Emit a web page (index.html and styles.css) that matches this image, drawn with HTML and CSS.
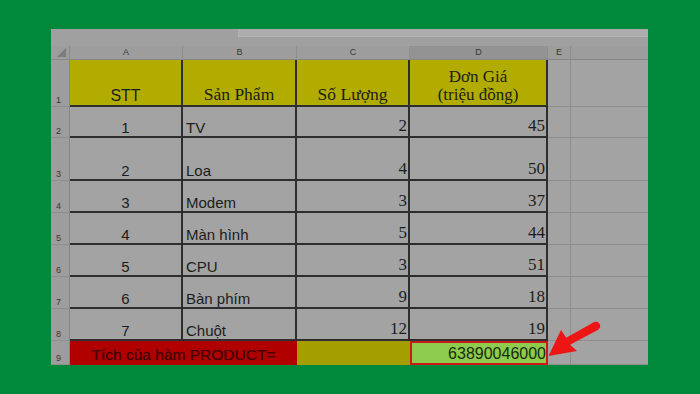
FILE: index.html
```html
<!DOCTYPE html>
<html>
<head>
<meta charset="utf-8">
<link rel="stylesheet" href="styles.css">
</head>
<body>
<div class="panel">
  <div class="topstrip"><div class="fbar"></div></div>
  <div class="sheet">
    <div class="corner"><span class="tri"></span></div>
    <div class="colhead">A</div>
    <div class="colhead">B</div>
    <div class="colhead">C</div>
    <div class="colhead sel">D</div>
    <div class="colhead">E</div>
    <div class="colhead last"></div>

    <div class="rowhead">1</div>
    <div class="cell t hdr sans big c">STT</div>
    <div class="cell t hdr serif hs c">Sản Phẩm</div>
    <div class="cell t hdr serif hs c">Số Lượng</div>
    <div class="cell t hdr serif c two">Đơn Giá<br>(triệu đồng)</div>
    <div class="cell"></div>
    <div class="cell last"></div>

    <div class="rowhead">2</div>
    <div class="cell t sans c">1</div>
    <div class="cell t sans l">TV</div>
    <div class="cell t serif r">2</div>
    <div class="cell t serif r">45</div>
    <div class="cell"></div>
    <div class="cell last"></div>

    <div class="rowhead">3</div>
    <div class="cell t sans c">2</div>
    <div class="cell t sans l">Loa</div>
    <div class="cell t serif r">4</div>
    <div class="cell t serif r">50</div>
    <div class="cell"></div>
    <div class="cell last"></div>

    <div class="rowhead">4</div>
    <div class="cell t sans c">3</div>
    <div class="cell t sans l">Modem</div>
    <div class="cell t serif r">3</div>
    <div class="cell t serif r">37</div>
    <div class="cell"></div>
    <div class="cell last"></div>

    <div class="rowhead">5</div>
    <div class="cell t sans c">4</div>
    <div class="cell t sans l">Màn hình</div>
    <div class="cell t serif r">5</div>
    <div class="cell t serif r">44</div>
    <div class="cell"></div>
    <div class="cell last"></div>

    <div class="rowhead">6</div>
    <div class="cell t sans c">5</div>
    <div class="cell t sans l">CPU</div>
    <div class="cell t serif r">3</div>
    <div class="cell t serif r">51</div>
    <div class="cell"></div>
    <div class="cell last"></div>

    <div class="rowhead">7</div>
    <div class="cell t sans c">6</div>
    <div class="cell t sans l">Bàn phím</div>
    <div class="cell t serif r">9</div>
    <div class="cell t serif r">18</div>
    <div class="cell"></div>
    <div class="cell last"></div>

    <div class="rowhead">8</div>
    <div class="cell t sans c">7</div>
    <div class="cell t sans l">Chuột</div>
    <div class="cell t serif r">12</div>
    <div class="cell t serif r">19</div>
    <div class="cell"></div>
    <div class="cell last"></div>

    <div class="rowhead">9</div>
    <div class="cell red sans c span2">Tích của hàm PRODUCT=</div>
    <div class="cell olive"></div>
    <div class="cell result sans r">63890046000</div>
    <div class="cell"></div>
    <div class="cell last"></div>
  </div>
  <svg class="arrow" width="60" height="40" viewBox="545 320 60 40">
    <polygon fill="#ee1515" points="593.8,322.3 598.2,329.7 570,344.8 577,351 548.5,356 561,330 566.2,337.7"/>
    <circle cx="596" cy="326" r="4.2" fill="#ee1515"/>
  </svg>
</div>
</body>
</html>
```

FILE: styles.css
```css
* { box-sizing: border-box; }
html, body { margin: 0; padding: 0; }
body {
  width: 700px;
  height: 394px;
  background: #00893a;
  padding: 29px 0 0 51px;
  overflow: hidden;
}
.panel {
  position: relative;
  width: 597px;
  height: 336px;
  background: #a3a3a3;
}
.topstrip {
  height: 17px;
  background: #a0a0a0;
  padding-left: 187px;
}
.fbar {
  height: 8px;
  background: #acacac;
  border-bottom: 1px solid #b4b4b4;
  border-left: 1px solid #b4b4b4;
}
.sheet {
  display: grid;
  grid-template-columns: 19px 113px 114px 113px 138px 23px 77px;
  grid-template-rows: 14px 47px 31px 43px 32px 32px 32px 32px 32px 24px;
  font-family: "Liberation Sans", Arial, sans-serif;
  color: #1c1c1c;
}
.corner {
  position: relative;
  background: #9d9d9d;
  border-right: 1px solid #8a8a8a;
  border-bottom: 1px solid #8a8a8a;
}
.tri {
  position: absolute;
  right: 3px;
  bottom: 2px;
  width: 0;
  height: 0;
  border-left: 9px solid transparent;
  border-bottom: 9px solid #7c7c7c;
}
.colhead {
  background: #9d9d9d;
  border-right: 1px solid #8e8e8e;
  border-bottom: 1px solid #868686;
  font-size: 9px;
  line-height: 13px;
  text-align: center;
  color: #383838;
}
.colhead.sel { background: #939393; }
.colhead.last, .cell.last { border-right: none; }
.rowhead {
  background: #9d9d9d;
  border-right: 1px solid #868686;
  border-bottom: 1px solid #8e8e8e;
  font-size: 9px;
  line-height: 12px;
  color: #383838;
  padding-left: 5px;
  display: flex;
  align-items: flex-end;
}
.cell {
  background: #a3a3a3;
  border-right: 1px solid #8d8d8d;
  border-bottom: 1px solid #8d8d8d;
  display: flex;
  align-items: flex-end;
  line-height: 17px;
  white-space: nowrap;
}
.cell.t {
  border-right: 2px solid #2e2e2e;
  border-bottom: 2px solid #2e2e2e;
}
.hdr { background: #b2ac00; }
.sans { font-family: "Liberation Sans", Arial, sans-serif; font-size: 15px; }
.sans.big { font-size: 16px; line-height: 19px; }
.serif { font-family: "Liberation Serif", "Times New Roman", serif; font-size: 17px; line-height: 20px; }
.serif.hs { font-size: 17.5px; line-height: 21px; }
.two { font-size: 17px; line-height: 18px; padding-bottom: 1px; text-align: center; }
.c { justify-content: center; text-align: center; }
.l { justify-content: flex-start; padding-left: 3px; }
.r { justify-content: flex-end; padding-right: 1px; }
.span2 { grid-column: span 2; }
.red {
  background: #b00000;
  color: #480000;
  border-right: none;
  border-bottom: none;
  line-height: 20px;
  font-size: 15.5px;
  text-shadow: 0 0 0.4px #480000;
}
.olive {
  background: #a59e00;
  border-right: none;
  border-bottom: none;
}
.result {
  background: #8dcc4e;
  border: 2px solid #c81a1a;
  font-size: 16px;
  line-height: 18px;
  color: #1a2a0a;
  padding-right: 0;
}
.arrow {
  position: absolute;
  left: 494px;
  top: 291px;
}
```
